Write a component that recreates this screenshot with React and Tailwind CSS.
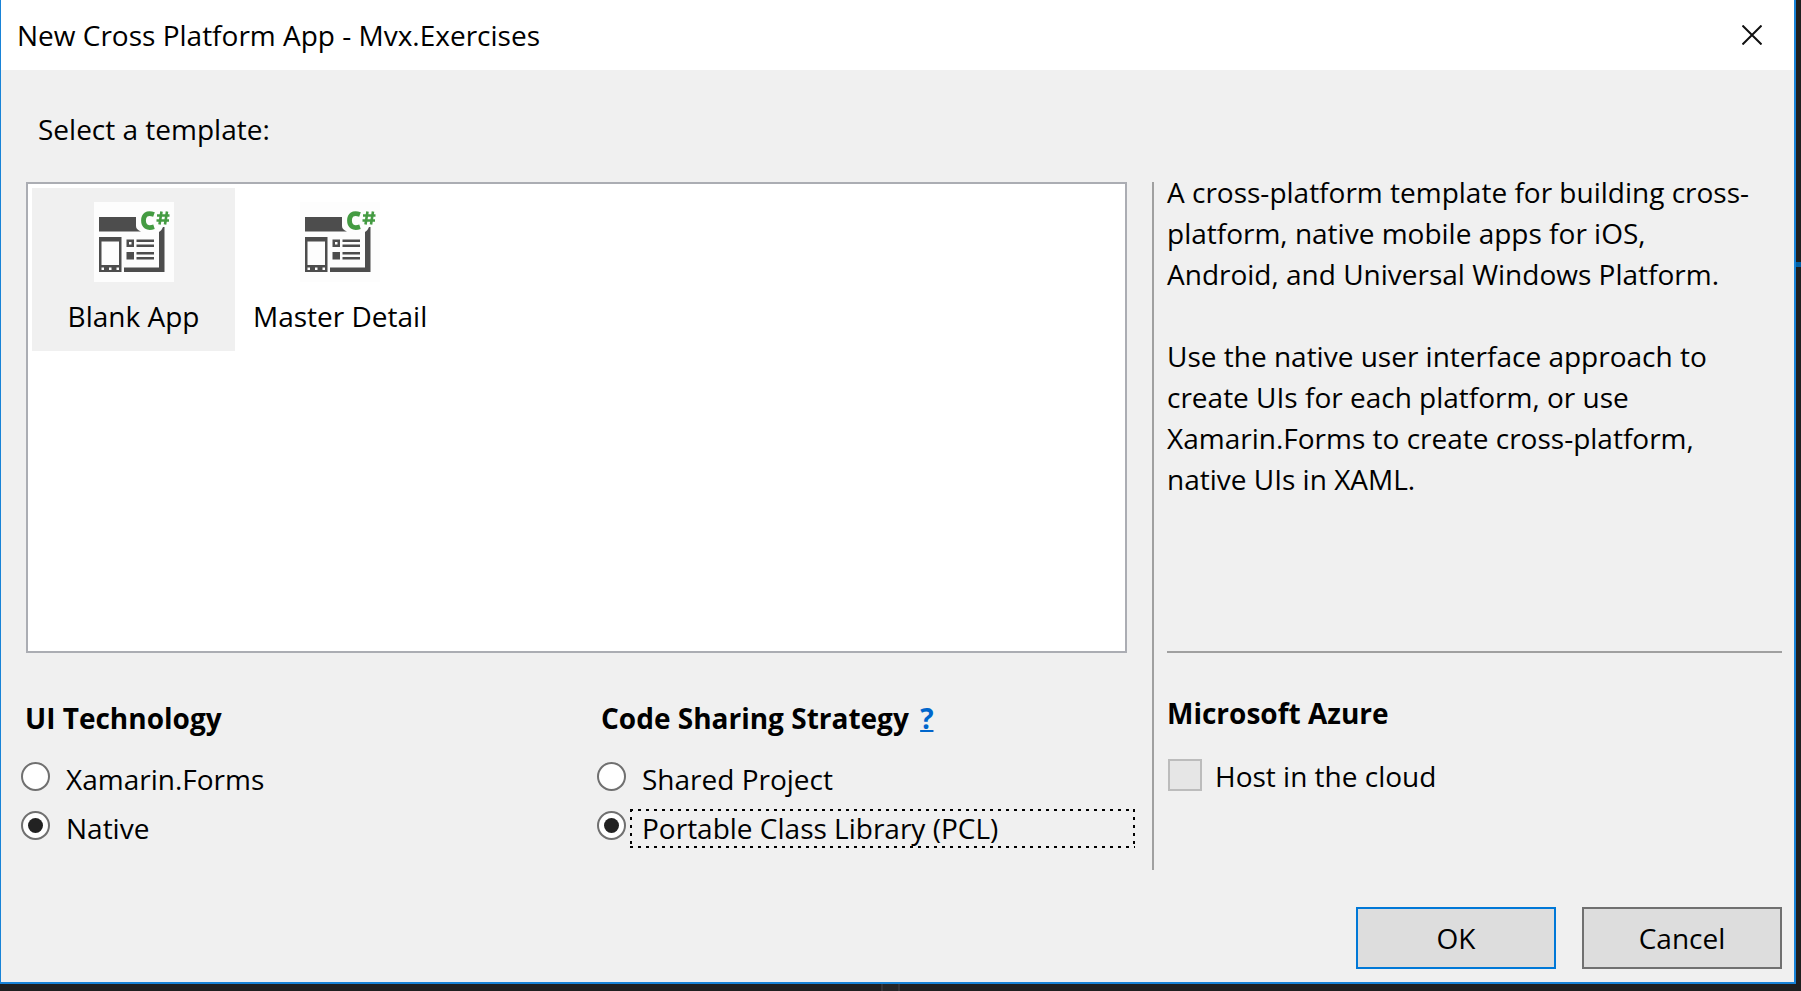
import { useState } from "react";

function TemplateIcon() {
  return (
    <svg viewBox="0 0 80 80" className="size-20 shrink-0" aria-hidden="true">
      <rect width="80" height="80" fill="#fdfdfd" />
      <g fill="#4d4d4d">
        <path d="M5 15H42V24C42 27 44 28 47 29.500H5Z" />
        <path d="M69 25L70.500 25V70H30V65.500H65V30C67 29 68 27 69 25Z" />
        <path fillRule="evenodd" d="M5 35H27.500V70H5ZM7.500 39.500V63H25V39.500ZM7.500 65.500V68H10V65.500ZM15 65.500V68H17.500V65.500ZM22.500 65.500V68H25V65.500Z" />
        <path fillRule="evenodd" d="M32.500 37.500H40V45H32.500ZM35 40V42.500H37.500V40Z" />
        <rect x="32.500" y="50" width="7.500" height="7.500" />
        <rect x="42.500" y="37.500" width="17.500" height="2.500" />
        <rect x="42.500" y="42.500" width="17.500" height="2.500" />
        <rect x="42.500" y="50" width="17.500" height="2.500" />
        <rect x="42.500" y="55" width="17.500" height="2.500" />
      </g>
      <g fill="none" stroke="#449b42">
        <path d="M60 12.500C53 10 49.500 13 49.500 18.500S53 27 60 24.800" strokeWidth="4.800" />
        <path d="M67.500 9.500L65.500 22.500M73 9.500L71 22.500M63 13.500H75.500M62.500 18.500H75" strokeWidth="2.600" />
      </g>
    </svg>
  );
}

function TemplateTile({ name, selected, onSelect }) {
  return (
    <button
      type="button"
      role="option"
      aria-selected={selected}
      onClick={onSelect}
      className={`flex h-[163px] min-w-[203px] flex-col items-center gap-[14px] px-[18px] pt-[14px] outline-none ${selected ? "bg-[#f0f0f0]" : "bg-white"}`}
    >
      <TemplateIcon />
      <span>{name}</span>
    </button>
  );
}

function RadioRow({ name, label, checked, onChange, focused }) {
  return (
    <label className="flex items-start gap-[4px]">
      <input
        type="radio"
        name={name}
        checked={checked}
        onChange={onChange}
        className="mt-[2px] flex size-[29px] shrink-0 appearance-none items-center justify-center rounded-full border-2 border-[#707070] bg-white outline-none before:size-[15px] before:rounded-full checked:before:bg-[#222222]"
      />
      <span
        className={`flex-1 pl-[12px] leading-[39px] ${focused ? "bg-[image:repeating-linear-gradient(90deg,#000_0_3px,transparent_3px_8px),repeating-linear-gradient(90deg,#000_0_3px,transparent_3px_8px),repeating-linear-gradient(#000_0_3px,transparent_3px_8px),repeating-linear-gradient(#000_0_3px,transparent_3px_8px)] bg-[length:100%_2px,100%_2px,2px_100%,2px_100%] bg-[position:top,bottom,left,right] bg-no-repeat" : ""}`}
      >
        {label}
      </span>
    </label>
  );
}

export default function App() {
  const [template, setTemplate] = useState("Blank App");
  const [ui, setUi] = useState("Native");
  const [sharing, setSharing] = useState("Portable Class Library (PCL)");

  return (
    <div className="flex min-h-screen flex-col bg-[#1f1f1f] font-['Open_Sans','Noto_Sans',sans-serif] text-[28px] leading-[41px] text-black">
      <div className="flex flex-1">
        <main className="flex flex-1 flex-col border-r-2 border-b-2 border-l border-[#1883d7] bg-[#f0f0f0]">
          <header className="flex h-[70px] shrink-0 items-center justify-between bg-white pr-[32px] pl-[16px]">
            <h1>New Cross Platform App - Mvx.Exercises</h1>
            <button type="button" aria-label="Close">
              <svg viewBox="0 0 20 20" className="size-5" fill="none" stroke="#111" strokeWidth="2">
                <path d="M0.500 0.500L19.500 19.500M19.500 0.500L0.500 19.500" />
              </svg>
            </button>
          </header>

          <div className="flex flex-1 flex-col pr-[12px] pb-[13px] pl-[20px]">
            <h2 className="mt-[39px] pl-[17px]">Select a template:</h2>

            <div className="mt-[32px] flex flex-1">
              <div className="flex flex-1 flex-col">
                <div
                  role="listbox"
                  aria-label="Templates"
                  className="mr-[25px] ml-[5px] flex flex-1 items-start border-2 border-[#abadb3] bg-white p-[4px]"
                >
                  {["Blank App", "Master Detail"].map((name) => (
                    <TemplateTile key={name} name={name} selected={template === name} onSelect={() => setTemplate(name)} />
                  ))}
                </div>

                <div className="grid h-[217px] grid-cols-[576px_1fr] pt-[45px] pr-[17px]">
                  <fieldset className="flex flex-col gap-[10px]">
                    <legend className="mb-[21px] pl-[4px] font-bold">UI Technology</legend>
                    {["Xamarin.Forms", "Native"].map((name) => (
                      <RadioRow key={name} name="ui" label={name} checked={ui === name} onChange={() => setUi(name)} />
                    ))}
                  </fieldset>
                  <fieldset className="flex flex-col gap-[10px]">
                    <legend className="mb-[21px] pl-[4px] font-bold">
                      Code Sharing Strategy{" "}
                      <a href="#help" className="ml-1 text-[#0066cc] underline decoration-2">?</a>
                    </legend>
                    {["Shared Project", "Portable Class Library (PCL)"].map((name) => (
                      <RadioRow
                        key={name}
                        name="sharing"
                        label={name}
                        checked={sharing === name}
                        onChange={() => setSharing(name)}
                        focused={sharing === name}
                      />
                    ))}
                  </fieldset>
                </div>
              </div>

              <aside className="flex w-[630px] flex-col border-l-2 border-[#a0a0a0] pl-[13px]">
                <div className="-mt-[10px] flex-1 space-y-[41px] border-b-2 border-[#a0a0a0] pr-[24px]">
                  <p>A cross-platform template for building cross-platform, native mobile apps for iOS, Android, and Universal Windows Platform.</p>
                  <p>Use the native user interface approach to create UIs for each platform, or use Xamarin.Forms to create cross-platform, native UIs in XAML.</p>
                </div>
                <div className="h-[217px] pt-[40px]">
                  <h3 className="font-bold">Microsoft Azure</h3>
                  <label className="mt-[22px] flex items-start gap-[13px]">
                    <input type="checkbox" disabled className="mt-[3px] ml-px h-[32px] w-[34px] appearance-none border-2 border-[#bcbcbc] bg-[#e6e6e6]" />
                    <span>Host in the cloud</span>
                  </label>
                </div>
              </aside>
            </div>

            <footer className="mt-[37px] flex justify-end gap-[26px]">
              <button type="button" className="h-[62px] w-[200px] border-2 border-[#0078d7] bg-[#dddddd]">OK</button>
              <button type="button" className="h-[62px] w-[200px] border-2 border-[#707070] bg-[#dddddd]">Cancel</button>
            </footer>
          </div>
        </main>
        <div className="w-[5px] pt-[262px]">
          <div className="h-[5px] bg-[#0062a8]" />
        </div>
      </div>
      <div className="flex h-[7px] pl-[881px]">
        <div className="w-[19px] border-x-2 border-[#333337] bg-[#252526]" />
      </div>
    </div>
  );
}
